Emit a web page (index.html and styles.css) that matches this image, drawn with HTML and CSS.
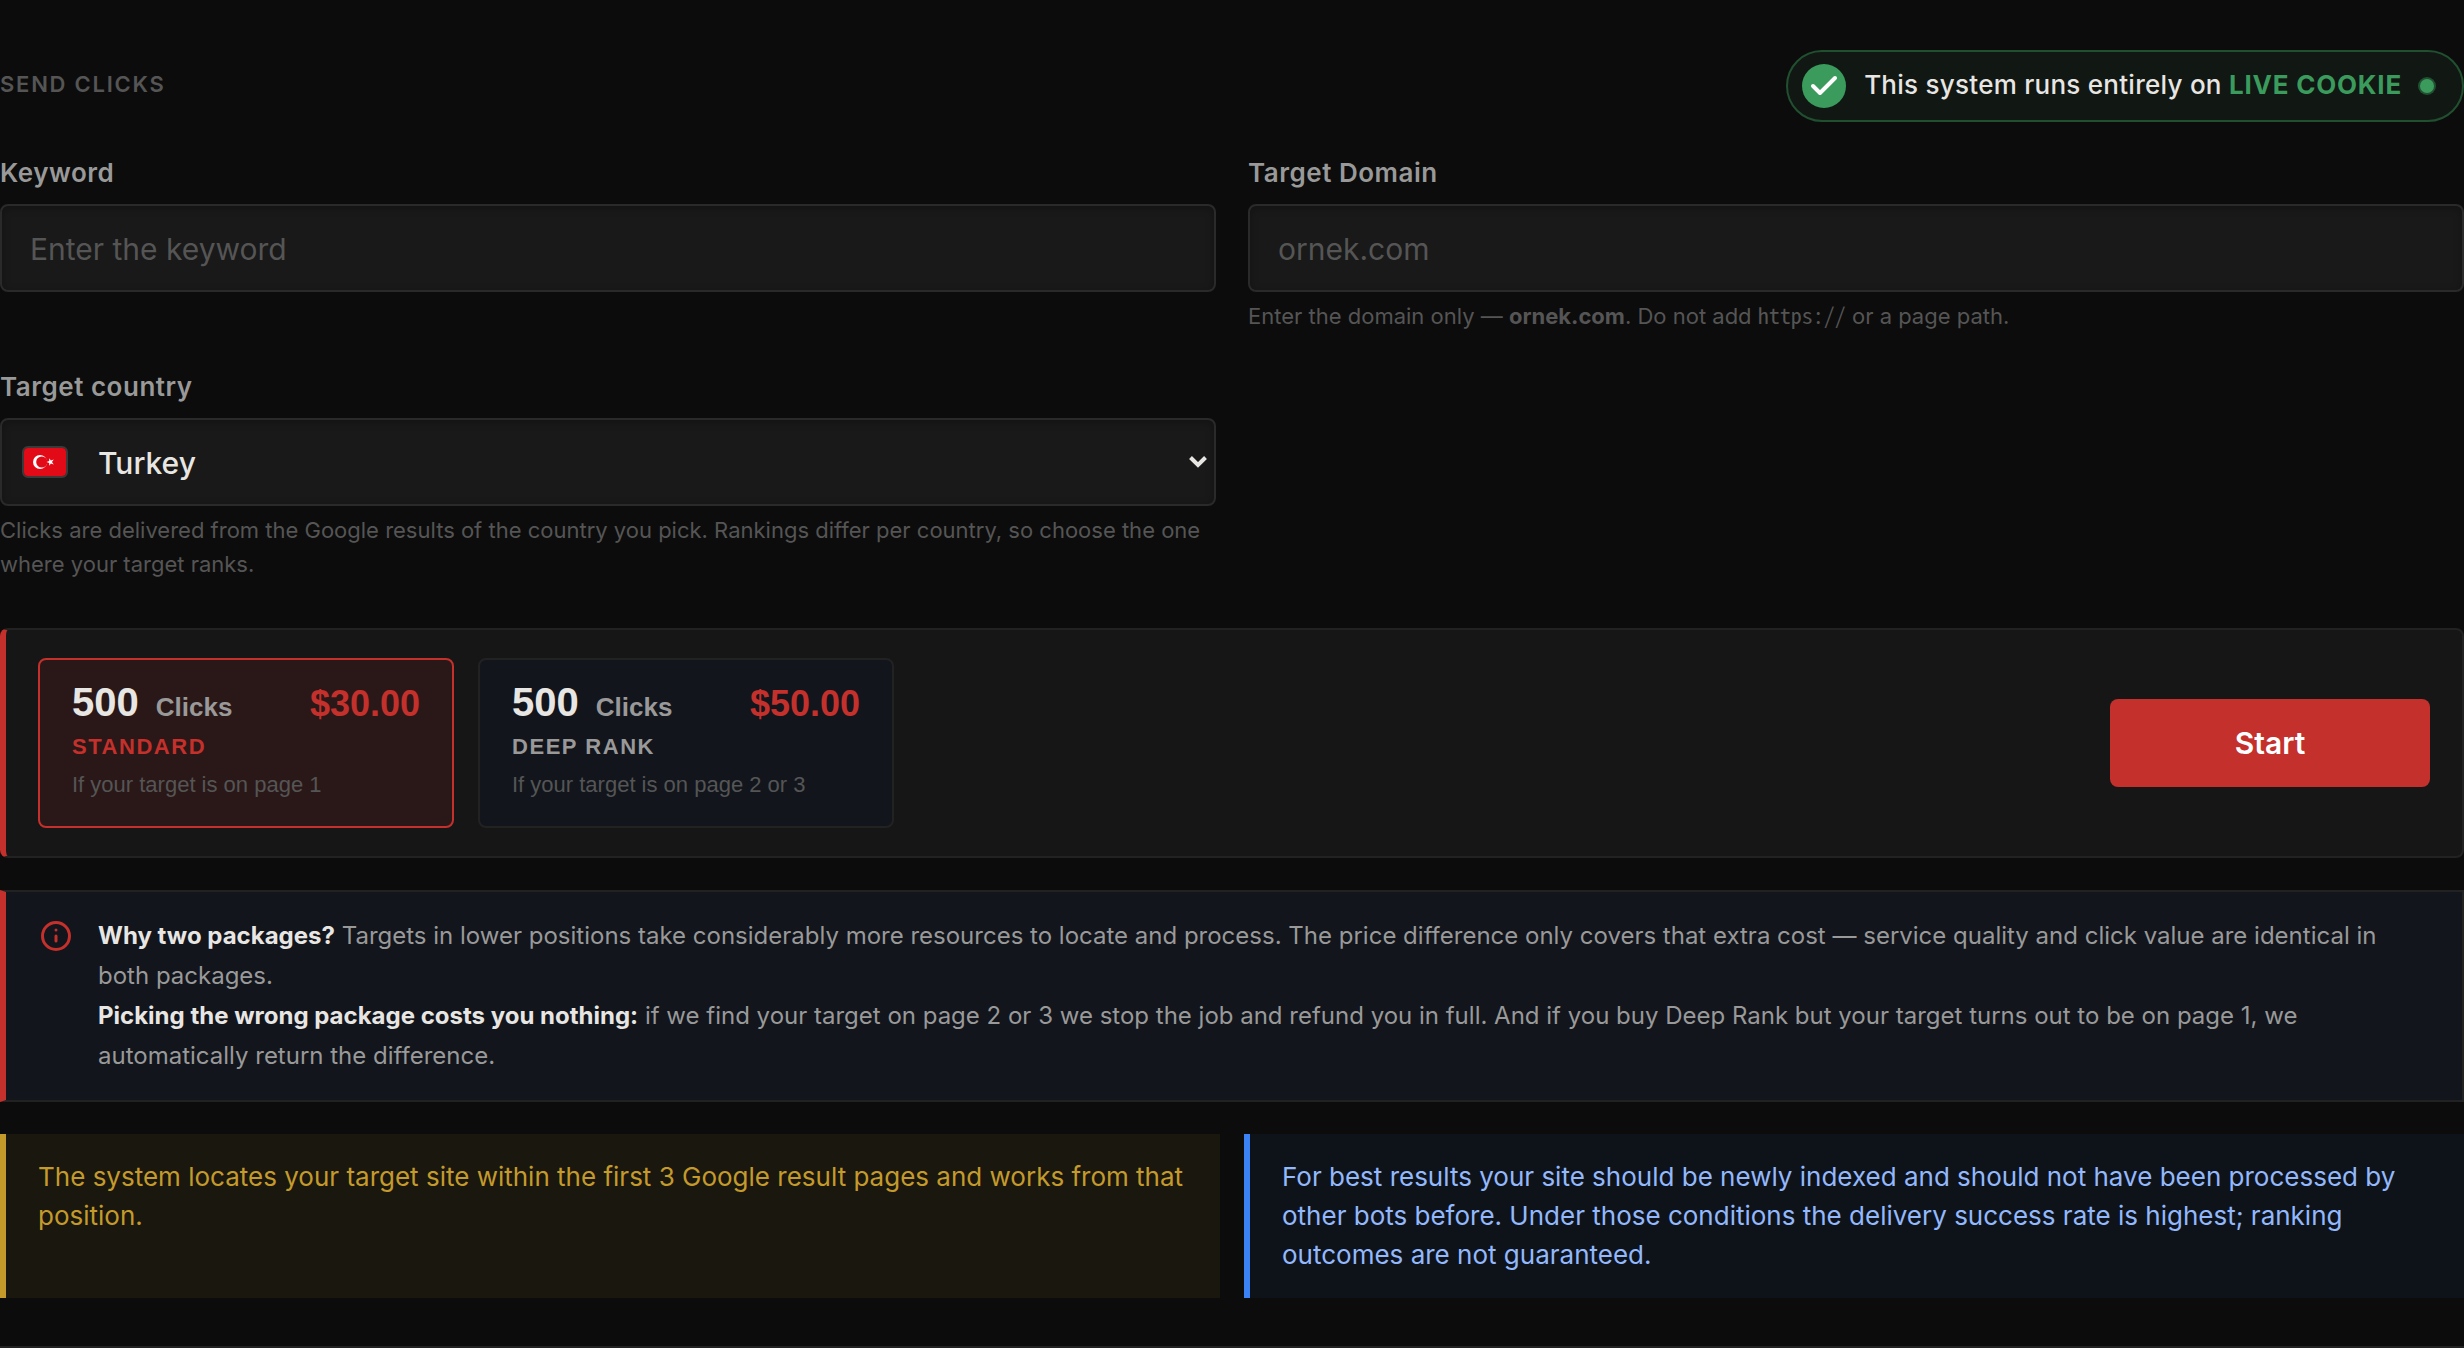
FILE: index.html
```html
<!DOCTYPE html>
<html lang="en">
<head>
<meta charset="utf-8">
<title>Send Clicks</title>
<link rel="stylesheet" href="styles.css">
</head>
<body>
<form class="page">
  <header class="head">
    <h1 class="eyebrow">Send Clicks</h1>
    <div class="live">
      <svg class="live-check" viewBox="0 0 44 44" aria-hidden="true"><circle cx="22" cy="22" r="22"/><path d="M11 22l7 7L33 14"/></svg>
      <span class="live-text">This system runs entirely on <strong>LIVE COOKIE</strong></span>
      <span class="live-dot"></span>
    </div>
  </header>

  <div class="fields">
    <div class="field">
      <label class="label" for="keyword">Keyword</label>
      <input class="control" id="keyword" type="text" placeholder="Enter the keyword">
    </div>
    <div class="field">
      <label class="label" for="domain">Target Domain</label>
      <input class="control" id="domain" type="text" placeholder="ornek.com">
      <p class="hint">Enter the domain only — <strong>ornek.com</strong>. Do not add <code>https://</code> or a page path.</p>
    </div>
    <div class="field">
      <label class="label" for="country">Target country</label>
      <div class="select-wrap">
        <select class="control select" id="country"><option>Turkey</option></select>
        <svg class="flag" viewBox="0 0 42 28" aria-hidden="true"><rect width="42" height="28" fill="#e30a17"/><circle cx="16" cy="14" r="7" fill="#fff"/><circle cx="17.800" cy="14" r="5.600" fill="#e30a17"/><path fill="#fff" d="M22.500 14l2.700-.9v-2.900l1.700 2.300 2.800-.9-1.700 2.400 1.700 2.400-2.800-.9-1.700 2.300v-2.900z"/></svg>
        <svg class="chevron" viewBox="0 0 18 12" aria-hidden="true"><path d="M1.500 1.500L9 9l7.500-7.500"/></svg>
      </div>
      <p class="hint">Clicks are delivered from the Google results of the country you pick. Rankings differ per country, so choose the one where your target ranks.</p>
    </div>
  </div>

  <section class="order">
    <div class="packages">
      <button type="button" class="package selected" aria-pressed="true">
        <span class="row"><span class="count">500</span><span class="unit">Clicks</span><span class="price">$30.00</span></span>
        <span class="tier">Standard</span>
        <span class="note">If your target is on page 1</span>
      </button>
      <button type="button" class="package" aria-pressed="false">
        <span class="row"><span class="count">500</span><span class="unit">Clicks</span><span class="price">$50.00</span></span>
        <span class="tier">Deep Rank</span>
        <span class="note">If your target is on page 2 or 3</span>
      </button>
    </div>
    <button type="submit" class="start">Start</button>
  </section>

  <section class="info">
    <svg class="info-icon" viewBox="0 0 36 36" aria-hidden="true"><circle cx="18" cy="18" r="13.500"/><path d="M18 18v5M18 12v.1"/></svg>
    <div class="info-text">
      <p><strong>Why two packages?</strong> Targets in lower positions take considerably more resources to locate and process. The price difference only covers that extra cost — service quality and click value are identical in both packages.</p>
      <p><strong>Picking the wrong package costs you nothing:</strong> if we find your target on page 2 or 3 we stop the job and refund you in full. And if you buy Deep Rank but your target turns out to be on page 1, we automatically return the difference.</p>
    </div>
  </section>

  <div class="notices">
    <p class="notice warn">The system locates your target site within the first 3 Google result pages and works from that position.</p>
    <p class="notice tip">For best results your site should be newly indexed and should not have been processed by other bots before. Under those conditions the delivery success rate is highest; ranking outcomes are not guaranteed.</p>
  </div>
</form>
<hr class="divider">
</body>
</html>
```
FILE: styles.css
```css
* { box-sizing: border-box; }
body {
  margin: 0;
  background: #0c0c0c;
  color: #e8e6e3;
  font-family: Inter, "Liberation Sans", sans-serif;
  font-size: 26px;
}
p, h1 { margin: 0; }
.page { padding: 50px 0 48px; }
.head { display: flex; justify-content: space-between; align-items: center; margin-bottom: 32px; }
.eyebrow { font-size: 22px; line-height: 32px; font-weight: 600; letter-spacing: .08em; text-transform: uppercase; color: #555; padding-bottom: 4px; }
.live {
  display: flex; align-items: center; gap: 18px;
  padding: 12px 28px 12px 14px;
  border: 2px solid #215030; border-radius: 36px;
  background: #111713;
}
.live-check { width: 44px; height: 44px; fill: #3a9b5c; }
.live-check path { fill: none; stroke: #fff; stroke-width: 4; stroke-linecap: round; stroke-linejoin: round; }
.live-text { font-weight: 500; line-height: 40px; letter-spacing: .01em; padding-bottom: 2px; }
.live-text strong { font-weight: 700; letter-spacing: .03em; color: #3a9b5c; }
.live-dot { width: 14px; height: 14px; border-radius: 50%; background: #3a9b5c; box-shadow: 0 0 0 2px #215030; }

.fields { display: grid; grid-template-columns: 1fr 1fr; gap: 35px 32px; margin-bottom: 47px; }
.field { display: flex; flex-direction: column; }
.label { font-weight: 600; line-height: 38px; letter-spacing: .02em; margin-bottom: 12px; color: #999; }
.control {
  width: 100%; height: 88px; padding: 2px 28px 0;
  border: 2px solid #2a2a2a; border-radius: 8px;
  background: #191919; color: #e8e6e3;
  font: inherit; font-size: 30px;
  box-shadow: inset 0 2px 8px #0004;
  appearance: none;
}
.control::placeholder { color: #555; opacity: 1; }
.hint { margin-top: 7px; font-size: 22px; line-height: 34px; color: #555; }
.hint code { font-family: "Noto Sans Mono CJK SC", "Noto Sans Mono CJK JP", "Liberation Mono", monospace; font-size: 22px; line-height: 1; }
.select-wrap { position: relative; display: flex; }
.select { padding-left: 96px; font-weight: 500; }
.flag { position: absolute; left: 22px; top: 28px; width: 46px; height: 32px; border: 2px solid #3a3a3a; border-radius: 6px; pointer-events: none; }
.chevron { position: absolute; right: 9px; top: 38px; width: 18px; height: 12px; fill: none; stroke: #e8e6e3; stroke-width: 4; pointer-events: none; }

.order {
  display: flex; justify-content: space-between; align-items: center;
  padding: 28px 32px; margin-bottom: 32px;
  border: 2px solid #222; border-left: 6px solid #c4302b; border-radius: 8px;
  background: #161616;
}
.packages { display: flex; gap: 24px; }
.package {
  display: flex; flex-direction: column; justify-content: flex-start; width: 416px; height: 170px;
  padding: 22px 32px;
  border: 2px solid #222; border-radius: 8px;
  background: #12151c; color: #999;
  font-family: "Liberation Sans", Arial, sans-serif; text-align: left;
}
.package.selected { border-color: #c4302b; background: #2a1818; }
.row { display: flex; align-items: baseline; line-height: 40px; font-weight: 700; }
.count { font-size: 40px; color: #e8e6e3; }
.unit { font-size: 26px; margin-left: 17px; }
.price { font-size: 36px; margin-left: auto; color: #c4302b; }
.tier { font-size: 22px; line-height: 32px; margin-top: 4px; font-weight: 700; letter-spacing: .07em; text-transform: uppercase; }
.selected .tier { color: #c4302b; }
.note { font-size: 22px; line-height: 32px; margin-top: 6px; color: #555; }
.start { width: 320px; height: 88px; border: 0; border-radius: 8px; background: #c4302b; color: #fff; font: inherit; font-size: 30px; font-weight: 600; }

.info {
  display: flex; gap: 24px; padding: 24px 32px; margin-bottom: 32px;
  border: 2px solid #222; border-left: 6px solid #c4302b;
  background: #12151c;
}
.info-icon { flex: none; width: 36px; height: 36px; margin-top: 2px; fill: none; stroke: #c4302b; stroke-width: 3; stroke-linecap: round; }
.info-text { font-size: 24px; line-height: 40px; color: #999; }
.info-text strong { font-weight: 700; color: #e8e6e3; }

.notices { display: grid; grid-template-columns: 1fr 1fr; gap: 24px; }
.notice { padding: 23px 32px 24px; border-left: 6px solid; line-height: 39px; }
.warn { border-color: #c49a2b; background: #1a170f; color: #c49a2b; }
.tip { border-color: #3b82f6; background: #0e131a; color: #93b8fc; }
.divider { margin: 0; border: 0; border-top: 2px solid #222; }
```
